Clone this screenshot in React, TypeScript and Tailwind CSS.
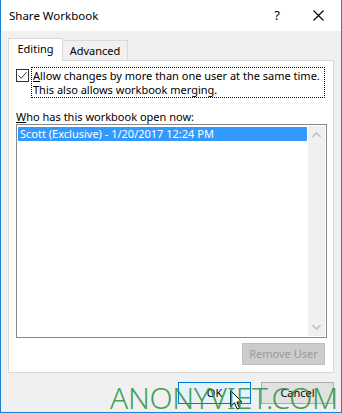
import React from "react";

const font = { fontFamily: '"Noto Sans", "Open Sans", sans-serif' };

export default function App() {
  return (
    <div
      className="relative w-[342px] h-[413px] overflow-hidden bg-[#f0f0f0] border-l border-r border-b border-[#1a83d6] flex flex-col text-[11px] text-black"
      style={font}
    >
      {/* Title bar */}
      <div className="h-[31px] bg-white flex items-center shrink-0">
        <span className="pl-[8px] text-[11.5px] leading-none text-[#000]">Share Workbook</span>
        <div className="flex-1" />
        <span className="w-[20px] text-center text-[13px] leading-none mr-[26px]">?</span>
        <svg width="11" height="11" viewBox="0 0 11 11" className="mr-[17px]">
          <path d="M0.5 0.5 L10.5 10.5 M10.5 0.5 L0.5 10.5" stroke="#000" strokeWidth="1.1" />
        </svg>
      </div>

      {/* Body */}
      <div className="flex flex-col px-[7px] pt-[7px]">
        {/* Tabs */}
        <div className="flex items-end h-[22px] relative z-10">
          <div className="w-[55px] h-[23px] bg-white border border-b-0 border-[#d9d9d9] flex items-center justify-center pb-[1px] mb-[-1px]">
            Editing
          </div>
          <div className="w-[65px] h-[20px] bg-[#f0f0f0] border border-l-0 border-b-0 border-[#d9d9d9] flex items-center justify-center pt-[1px]">
            Advanced
          </div>
        </div>
        {/* Panel */}
        <div className="w-[326px] h-[313px] bg-white border border-[#d9d9d9] flex flex-col px-[7px] pt-[6px]">
          <div className="flex items-start">
            <div className="mt-[2px] w-[13px] h-[13px] border border-[#333] bg-white flex items-center justify-center shrink-0">
              <svg width="11" height="11" viewBox="0 0 11 11">
                <path d="M1.5 5.5 L4.2 8.3 L9.6 2.2" fill="none" stroke="#333" strokeWidth="1" />
              </svg>
            </div>
            <div className="ml-[2px] w-[294px] border border-dotted border-black px-[1px] pt-[1px] leading-[14px] whitespace-nowrap">
              <div>
                <span className="underline">A</span>llow changes by more than one user at the same time.
              </div>
              <div>This also allows workbook merging.</div>
            </div>
          </div>

          <div className="mt-[12px] leading-[14px]">
            <span className="underline">W</span>ho has this workbook open now:
          </div>

          {/* Listbox */}
          <div className="w-[311px] h-[214px] border border-[#828790] bg-white flex p-[1px]">
            <div className="flex-1 flex flex-col pt-[1px] pr-[1px]">
              <div className="h-[14px] bg-[#3399ff] text-white leading-[14px] pl-[2px]">
                Scott (Exclusive) - 1/20/2017 12:24 PM
              </div>
            </div>
            <div className="w-[17px] bg-[#f0f0f0] flex flex-col justify-between items-center py-[6px]">
              <svg width="9" height="6" viewBox="0 0 9 6">
                <path d="M0.5 5 L4.5 1 L8.5 5" fill="none" stroke="#c2c2c2" strokeWidth="1.6" />
              </svg>
              <svg width="9" height="6" viewBox="0 0 9 6">
                <path d="M0.5 1 L4.5 5 L8.5 1" fill="none" stroke="#c2c2c2" strokeWidth="1.6" />
              </svg>
            </div>
          </div>

          <div className="flex justify-end mt-[5px] pr-[1px]">
            <div className="w-[83px] h-[22px] bg-[#cccccc] border border-[#bfbfbf] flex items-center justify-center text-[#9a9a9a]">
              Remove User
            </div>
          </div>
        </div>

        {/* Buttons */}
        <div className="flex justify-end mt-[9px] gap-[10px]">
          <div className="w-[73px] h-[22px] bg-[#e5f1fb] border border-[#0078d7] flex items-center justify-center">
            OK
          </div>
          <div className="w-[73px] h-[22px] bg-[#e1e1e1] border border-[#adadad] flex items-center justify-center">
            Cancel
          </div>
        </div>
      </div>

      {/* Cursor */}
      <svg
        className="absolute left-[229px] top-[390px]"
        width="13"
        height="21"
        viewBox="0 0 13 21"
      >
        <path
          d="M0.5 0.5 L0.5 16.5 L4.5 12.8 L7.2 19 L9.5 18 L6.9 12 L12 12 Z"
          fill="#fff"
          stroke="#000"
          strokeWidth="1"
        />
      </svg>

      {/* Watermark */}
      <div
        className="absolute left-[109px] top-[383px] text-[30px] leading-none font-light tracking-[-0.3px] text-[#2e9440]/90 whitespace-nowrap pointer-events-none"
        style={{ fontFamily: '"Noto Sans", sans-serif' }}
      >
        ANONYVIET.COM
      </div>
    </div>
  );
}
